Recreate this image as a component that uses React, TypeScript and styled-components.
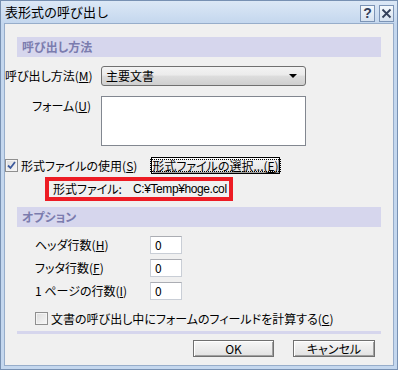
import React from "react";
import styled, { createGlobalStyle } from "styled-components";

const GlobalStyle = createGlobalStyle`
  html, body {
    margin: 0;
    padding: 0;
    background: #ffffff;
  }
  body {
    font-family: "Noto Sans CJK JP", "Liberation Sans", sans-serif;
    font-size: 12px;
    line-height: 14px;
    font-feature-settings: "palt";
    color: #000000;
  }
`;

const Window = styled.div`
  width: 398px;
  height: 370px;
  box-sizing: border-box;
  display: flex;
  flex-direction: column;
  background: #c4d7ee;
  border: 1px solid #7891b3;
`;

const TitleBar = styled.div`
  height: 22px;
  display: flex;
  align-items: center;
  padding: 0 3px 0 4px;
  background: linear-gradient(#dce8f6, #c4d7ee);
`;

const TitleText = styled.span`
  font-size: 13px;
  line-height: 22px;
  font-feature-settings: normal;
`;

const TitleButtons = styled.div`
  margin-left: auto;
  display: flex;
  gap: 4px;
  margin-top: 2px;
`;

const TitleButton = styled.div`
  width: 15px;
  height: 17px;
  box-sizing: border-box;
  border: 1px solid #7c94b6;
  background: linear-gradient(#f4f8fc, #d6e2f0);
  display: flex;
  align-items: center;
  justify-content: center;
  font-family: "Liberation Sans", sans-serif;
  font-weight: bold;
  font-size: 14px;
  color: #33405a;
`;

const Client = styled.div`
  flex: 1;
  margin: 0 3px 3px 3px;
  background: #f0f0f0;
  border: 1px solid #97adca;
  display: flex;
  flex-direction: column;
  white-space: nowrap;
`;

const SectionBand = styled.div<{ $top: number }>`
  margin: ${(p) => p.$top}px 12px 0 12px;
  height: 20px;
  background: #d6d6ed;
  color: #7b7cae;
  font-weight: bold;
  font-size: 12px;
  line-height: 20px;
  padding-left: 5px;
`;

const FieldRow = styled.div<{ $top: number; $h?: number; $align?: string }>`
  display: flex;
  align-items: ${(p) => p.$align ?? "center"};
  margin-top: ${(p) => p.$top}px;
  height: ${(p) => (p.$h ? `${p.$h}px` : "auto")};
`;

const FieldLabel = styled.label<{ $pad?: number }>`
  width: 86px;
  text-align: right;
  margin-right: 10px;
  padding-top: ${(p) => p.$pad ?? 0}px;
`;

const Key = styled.span`
  text-decoration: underline;
`;

const Select = styled.div`
  width: 205px;
  height: 20px;
  box-sizing: border-box;
  border: 1px solid #707070;
  border-radius: 3px;
  background: linear-gradient(#f3f3f3 0%, #ebebeb 45%, #dddddd 50%, #cfcfcf 100%);
  display: flex;
  align-items: center;
  padding: 0 8px 0 4px;
`;

const SelectText = styled.span`
  flex: 1;
`;

const Arrow = styled.span`
  width: 0;
  height: 0;
  border-left: 4px solid transparent;
  border-right: 4px solid transparent;
  border-top: 4px solid #000000;
`;

const TextArea = styled.div`
  width: 205px;
  height: 50px;
  box-sizing: border-box;
  background: #ffffff;
  border: 1px solid #828790;
`;

const CheckGroup = styled.label<{ $width?: number; $indent?: number }>`
  display: flex;
  align-items: center;
  width: ${(p) => (p.$width ? `${p.$width}px` : "auto")};
  padding-left: ${(p) => p.$indent ?? 0}px;
`;

const CheckBox = styled.span`
  position: relative;
  width: 13px;
  height: 13px;
  box-sizing: border-box;
  border: 1px solid #8f8f8f;
  background: linear-gradient(135deg, #dcdcdc, #f7f7f7);
  box-shadow: inset 0 0 0 1px #f4f4f4;
  margin-right: 3px;
  flex-shrink: 0;
`;

const CheckMark = styled.svg`
  position: absolute;
  left: 1px;
  top: 1px;
`;

const PushButton = styled.button<{ $focused?: boolean; $width: number }>`
  width: ${(p) => p.$width}px;
  height: 17px;
  box-sizing: border-box;
  padding: 0;
  font: inherit;
  font-feature-settings: "palt";
  white-space: nowrap;
  color: #000000;
  border: 1px solid ${(p) => (p.$focused ? "#000000" : "#707070")};
  background: linear-gradient(#f6f6f6, #e2e2e2);
  box-shadow: inset 1px 1px 0 #ffffff, inset -1px -1px 0 #a0a0a0;
  display: flex;
  align-items: center;
  justify-content: center;
  line-height: 15px;
`;

const FocusRing = styled.span`
  border: 1px dotted #000000;
  padding: 0 1px;
  line-height: 11px;
`;

const RedBox = styled.div`
  margin: 3px 0 0 40px;
  width: 188px;
  height: 24px;
  box-sizing: border-box;
  border: 4px solid #ed1c24;
  display: flex;
  align-items: center;
  padding-left: 4px;
  overflow: hidden;
`;

const InfoLabel = styled.span`
  width: 80px;
  flex-shrink: 0;
`;

const InfoValue = styled.span`
  font-family: "Liberation Sans", sans-serif;
  font-size: 12px;
  letter-spacing: -0.4px;
`;

const OptionList = styled.div`
  display: flex;
  flex-direction: column;
  gap: 5px;
  margin-top: 9px;
`;

const OptionRow = styled.div`
  display: flex;
  align-items: center;
  height: 18px;
  padding-left: 30px;
`;

const OptionLabel = styled.label`
  width: 115px;
`;

const NumberBox = styled.div`
  width: 32px;
  height: 18px;
  box-sizing: border-box;
  background: #ffffff;
  border: 1px solid #c9ced6;
  border-top-color: #abadb3;
  padding-left: 4px;
  line-height: 16px;
`;

const Separator = styled.div`
  margin: 6px 12px 0 12px;
  height: 3px;
  background: #d6d6ed;
`;

const ButtonBar = styled.div`
  display: flex;
  justify-content: flex-end;
  gap: 19px;
  margin-top: 6px;
  padding-right: 18px;
`;

const options = [
  { label: "ヘッダ行数", key: "H" },
  { label: "フッタ行数", key: "F" },
  { label: "1 ページの行数", key: "I" },
];

const Check = ({ checked }: { checked?: boolean }) => (
  <CheckBox>
    {checked && (
      <CheckMark width="9" height="9" viewBox="0 0 9 9">
        <path d="M1 4.5 L3.5 7 L8 1" fill="none" stroke="#3d5a9c" strokeWidth="1.8" />
      </CheckMark>
    )}
  </CheckBox>
);

export default function App() {
  return (
    <>
      <GlobalStyle />
      <Window>
        <TitleBar>
          <TitleText>表形式の呼び出し</TitleText>
          <TitleButtons>
            <TitleButton>?</TitleButton>
            <TitleButton>
              <svg width="11" height="11" viewBox="0 0 11 11">
                <path d="M1.5 1.5 L9.5 9.5 M9.5 1.5 L1.5 9.5" stroke="#33405a" strokeWidth="1.8" />
              </svg>
            </TitleButton>
          </TitleButtons>
        </TitleBar>
        <Client>
          <SectionBand $top={13}>呼び出し方法</SectionBand>

          <FieldRow $top={9} $h={20}>
            <FieldLabel>
              呼び出し方法(<Key>M</Key>)
            </FieldLabel>
            <Select>
              <SelectText>主要文書</SelectText>
              <Arrow />
            </Select>
          </FieldRow>

          <FieldRow $top={10} $align="flex-start">
            <FieldLabel $pad={3}>
              フォーム(<Key>U</Key>)
            </FieldLabel>
            <TextArea />
          </FieldRow>

          <FieldRow $top={11} $h={17}>
            <CheckGroup $width={146}>
              <Check checked />
              形式ファイルの使用(<Key>S</Key>)
            </CheckGroup>
            <PushButton $focused $width={129}>
              <FocusRing>
                形式ファイルの選択...(<Key>E</Key>)
              </FocusRing>
            </PushButton>
          </FieldRow>

          <RedBox>
            <InfoLabel>形式ファイル:</InfoLabel>
            <InfoValue>C:¥Temp¥hoge.col</InfoValue>
          </RedBox>

          <SectionBand $top={6}>オプション</SectionBand>

          <OptionList>
            {options.map((o) => (
              <OptionRow key={o.key}>
                <OptionLabel>
                  {o.label}(<Key>{o.key}</Key>)
                </OptionLabel>
                <NumberBox>0</NumberBox>
              </OptionRow>
            ))}
          </OptionList>

          <FieldRow $top={12} $h={13}>
            <CheckGroup $indent={30}>
              <Check />
              文書の呼び出し中にフォームのフィールドを計算する(<Key>C</Key>)
            </CheckGroup>
          </FieldRow>

          <Separator />

          <ButtonBar>
            <PushButton $width={81}>OK</PushButton>
            <PushButton $width={82}>キャンセル</PushButton>
          </ButtonBar>
        </Client>
      </Window>
    </>
  );
}
